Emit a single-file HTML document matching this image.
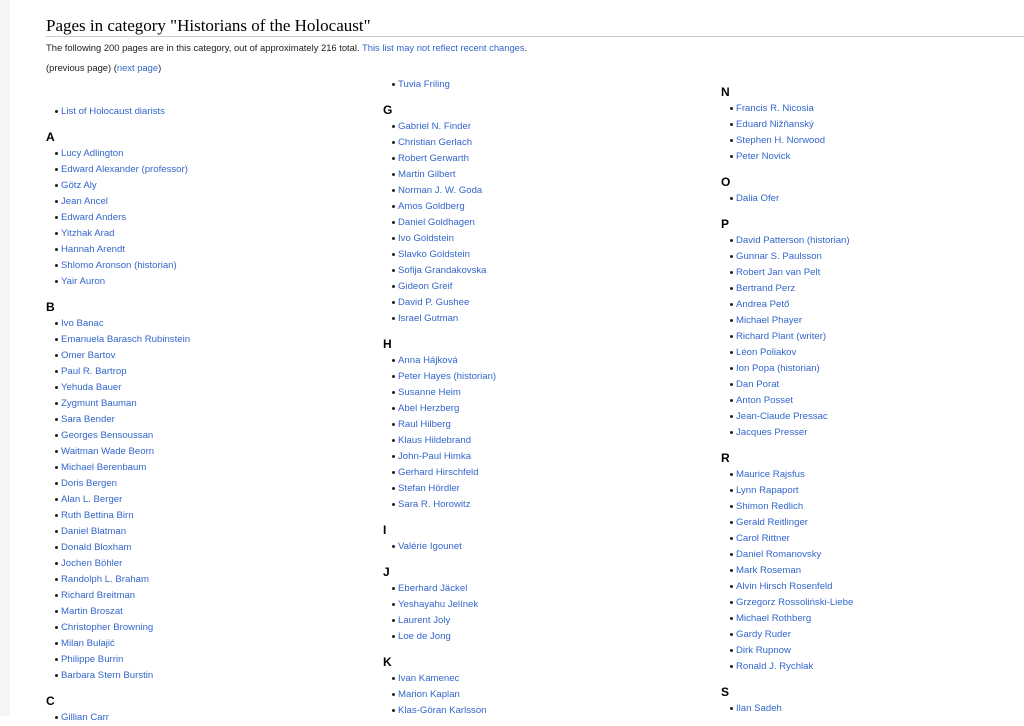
<!DOCTYPE html>
<html><head><meta charset="utf-8"><style>
body{margin:0;width:1024px;height:716px;overflow:hidden;background:#fff;font-family:"Liberation Sans",Arial,sans-serif;position:relative}
.strip{position:absolute;left:0;top:0;width:10px;height:716px;background:#f6f6f6}
h1{position:absolute;left:46px;top:16px;margin:0;width:978px;font:normal 17px/20px "Liberation Serif",serif;color:#000;border-bottom:1px solid #c8ccd1;padding-bottom:0}
.p{position:absolute;left:46px;font-size:9.4px;color:#202122;line-height:14px}
a{color:#3366cc;text-decoration:none}
.col{position:absolute;width:330px}
.col h3{margin:9px 0 1px;font-size:12px;line-height:16px;font-weight:bold;color:#000}
.col h3.f{margin-top:0}
.col ul{margin:0;padding:0;list-style:none}
.col li{font-size:9.6px;line-height:16px;padding-left:15px;position:relative;white-space:nowrap}
.col li:before{content:"";position:absolute;left:9px;top:6px;width:3px;height:3px;border-radius:50%;background:#202122}
</style></head><body>
<div class="strip"></div>
<h1>Pages in category "Historians of the Holocaust"</h1>
<div class="p" style="top:41px">The following 200 pages are in this category, out of approximately 216 total. <a>This list may not reflect recent changes</a>.</div>
<div class="p" style="top:61px">(previous page) (<a>next page</a>)</div>

<div class="col" style="left:46px;top:104px">
<ul><li><a>List of Holocaust diarists</a></li></ul>
<h3>A</h3><ul>
<li><a>Lucy Adlington</a></li><li><a>Edward Alexander (professor)</a></li><li><a>Götz Aly</a></li><li><a>Jean Ancel</a></li><li><a>Edward Anders</a></li><li><a>Yitzhak Arad</a></li><li><a>Hannah Arendt</a></li><li><a>Shlomo Aronson (historian)</a></li><li><a>Yair Auron</a></li></ul>
<h3>B</h3><ul>
<li><a>Ivo Banac</a></li><li><a>Emanuela Barasch Rubinstein</a></li><li><a>Omer Bartov</a></li><li><a>Paul R. Bartrop</a></li><li><a>Yehuda Bauer</a></li><li><a>Zygmunt Bauman</a></li><li><a>Sara Bender</a></li><li><a>Georges Bensoussan</a></li><li><a>Waitman Wade Beorn</a></li><li><a>Michael Berenbaum</a></li><li><a>Doris Bergen</a></li><li><a>Alan L. Berger</a></li><li><a>Ruth Bettina Birn</a></li><li><a>Daniel Blatman</a></li><li><a>Donald Bloxham</a></li><li><a>Jochen Böhler</a></li><li><a>Randolph L. Braham</a></li><li><a>Richard Breitman</a></li><li><a>Martin Broszat</a></li><li><a>Christopher Browning</a></li><li><a>Milan Bulajić</a></li><li><a>Philippe Burrin</a></li><li><a>Barbara Stern Burstin</a></li></ul>
<h3>C</h3><ul><li><a>Gillian Carr</a></li></ul>
</div>

<div class="col" style="left:383px;top:77px">
<ul><li><a>Tuvia Friling</a></li></ul>
<h3>G</h3><ul>
<li><a>Gabriel N. Finder</a></li><li><a>Christian Gerlach</a></li><li><a>Robert Gerwarth</a></li><li><a>Martin Gilbert</a></li><li><a>Norman J. W. Goda</a></li><li><a>Amos Goldberg</a></li><li><a>Daniel Goldhagen</a></li><li><a>Ivo Goldstein</a></li><li><a>Slavko Goldstein</a></li><li><a>Sofija Grandakovska</a></li><li><a>Gideon Greif</a></li><li><a>David P. Gushee</a></li><li><a>Israel Gutman</a></li></ul>
<h3>H</h3><ul>
<li><a>Anna Hájková</a></li><li><a>Peter Hayes (historian)</a></li><li><a>Susanne Heim</a></li><li><a>Abel Herzberg</a></li><li><a>Raul Hilberg</a></li><li><a>Klaus Hildebrand</a></li><li><a>John-Paul Himka</a></li><li><a>Gerhard Hirschfeld</a></li><li><a>Stefan Hördler</a></li><li><a>Sara R. Horowitz</a></li></ul>
<h3>I</h3><ul><li><a>Valérie Igounet</a></li></ul>
<h3>J</h3><ul>
<li><a>Eberhard Jäckel</a></li><li><a>Yeshayahu Jelínek</a></li><li><a>Laurent Joly</a></li><li><a>Loe de Jong</a></li></ul>
<h3>K</h3><ul>
<li><a>Ivan Kamenec</a></li><li><a>Marion Kaplan</a></li><li><a>Klas-Göran Karlsson</a></li></ul>
</div>

<div class="col" style="left:721px;top:84px">
<h3 class="f">N</h3><ul>
<li><a>Francis R. Nicosia</a></li><li><a>Eduard Nižňanský</a></li><li><a>Stephen H. Norwood</a></li><li><a>Peter Novick</a></li></ul>
<h3>O</h3><ul><li><a>Dalia Ofer</a></li></ul>
<h3>P</h3><ul>
<li><a>David Patterson (historian)</a></li><li><a>Gunnar S. Paulsson</a></li><li><a>Robert Jan van Pelt</a></li><li><a>Bertrand Perz</a></li><li><a>Andrea Pető</a></li><li><a>Michael Phayer</a></li><li><a>Richard Plant (writer)</a></li><li><a>Léon Poliakov</a></li><li><a>Ion Popa (historian)</a></li><li><a>Dan Porat</a></li><li><a>Anton Posset</a></li><li><a>Jean-Claude Pressac</a></li><li><a>Jacques Presser</a></li></ul>
<h3>R</h3><ul>
<li><a>Maurice Rajsfus</a></li><li><a>Lynn Rapaport</a></li><li><a>Shimon Redlich</a></li><li><a>Gerald Reitlinger</a></li><li><a>Carol Rittner</a></li><li><a>Daniel Romanovsky</a></li><li><a>Mark Roseman</a></li><li><a>Alvin Hirsch Rosenfeld</a></li><li><a>Grzegorz Rossoliński-Liebe</a></li><li><a>Michael Rothberg</a></li><li><a>Gardy Ruder</a></li><li><a>Dirk Rupnow</a></li><li><a>Ronald J. Rychlak</a></li></ul>
<h3>S</h3><ul><li><a>Ilan Sadeh</a></li></ul>
</div>
</body></html>
